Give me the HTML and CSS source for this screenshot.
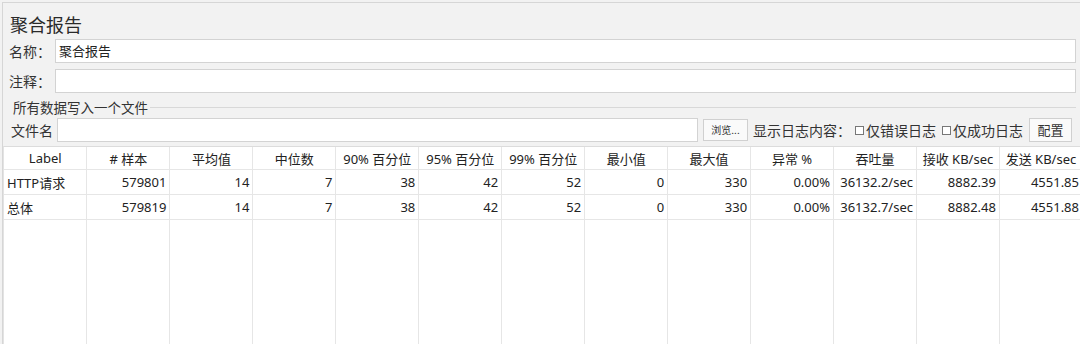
FILE: index.html
```html
<!DOCTYPE html>
<html lang="zh">
<head>
<meta charset="utf-8">
<link rel="stylesheet" href="styles.css">
</head>
<body>
<div class="panel">
  <div class="title">聚合报告</div>
  <div class="form-row">
    <span class="label">名称：</span>
    <div class="input">聚合报告</div>
  </div>
  <div class="form-row">
    <span class="label">注释：</span>
    <div class="input"></div>
  </div>
  <div class="group-title"><span>所有数据写入一个文件</span><div class="rule"></div></div>
  <div class="file-row">
    <span class="file-label">文件名</span>
    <div class="input file-input"></div>
    <div class="btn btn-small">浏览...</div>
    <span class="show-log">显示日志内容：</span>
    <span class="check"><span class="box"></span>仅错误日志</span>
    <span class="check"><span class="box"></span>仅成功日志</span>
    <div class="btn btn-config">配置</div>
  </div>
  <div class="table-wrap">
    <table class="grid">
      <thead>
        <tr>
          <th>Label</th><th># 样本</th><th>平均值</th><th>中位数</th><th>90% 百分位</th><th>95% 百分位</th><th>99% 百分位</th><th>最小值</th><th>最大值</th><th>异常 %</th><th>吞吐量</th><th>接收 KB/sec</th><th>发送 KB/sec</th>
        </tr>
      </thead>
      <tbody>
        <tr>
          <td class="txt">HTTP请求</td><td>579801</td><td>14</td><td>7</td><td>38</td><td>42</td><td>52</td><td>0</td><td>330</td><td>0.00%</td><td>36132.2/sec</td><td>8882.39</td><td>4551.85</td>
        </tr>
        <tr>
          <td class="txt">总体</td><td>579819</td><td>14</td><td>7</td><td>38</td><td>42</td><td>52</td><td>0</td><td>330</td><td>0.00%</td><td>36132.7/sec</td><td>8882.48</td><td>4551.88</td>
        </tr>
        <tr class="filler">
          <td></td><td></td><td></td><td></td><td></td><td></td><td></td><td></td><td></td><td></td><td></td><td></td><td></td>
        </tr>
      </tbody>
    </table>
  </div>
</div>
</body>
</html>
```

FILE: styles.css
```css
html, body {
  margin: 0;
  padding: 0;
  background: #f2f2f2;
  overflow: hidden;
  height: 344px;
}
body {
  font-family: "Noto Sans CJK SC", "Noto Sans", sans-serif;
  color: #222;
}
.panel {
  margin-top: 2px;
  margin-left: 2px;
  border-top: 1px solid #d6d6d6;
  border-left: 1px solid #d6d6d6;
  height: 341px;
  display: flex;
  flex-direction: column;
}
.title {
  font-size: 18px;
  line-height: 24px;
  padding: 9px 0 0 7px;
  height: 27px;
  color: #2a2a2a;
}
.form-row {
  display: flex;
  align-items: center;
  height: 24px;
  padding-right: 4px;
}
.form-row + .form-row {
  margin-top: 6px;
}
.label {
  width: 46px;
  padding-left: 6px;
  font-size: 14px;
  color: #333;
  flex: none;
}
.input {
  flex: 1;
  height: 22px;
  background: #fff;
  border: 1px solid #d3d3d3;
  font-size: 13px;
  line-height: 22px;
  padding-left: 3px;
  color: #222;
}
.group-title {
  display: flex;
  align-items: center;
  margin-top: 6px;
  padding-left: 10px;
  padding-right: 4px;
  font-size: 13.5px;
  color: #333;
  height: 16px;
}
.group-title .rule {
  flex: 1;
  height: 0;
  border-top: 1px solid #d8d8d8;
  margin-left: 2px;
}
.file-row {
  display: flex;
  align-items: center;
  height: 24px;
  margin-top: 3px;
  padding-right: 8px;
  font-size: 14px;
  color: #333;
}
.file-label {
  width: 46px;
  padding-left: 8px;
  flex: none;
}
.file-input {
  flex: none;
  width: 636px;
}
.btn {
  background: #fafafa;
  border: 1px solid #d0d0d0;
  color: #333;
  text-align: center;
  flex: none;
}
.btn-small {
  margin-left: 5px;
  width: 43px;
  height: 20px;
  font-size: 10px;
  line-height: 20px;
}
.show-log {
  margin-left: 5px;
}
.check {
  display: inline-flex;
  align-items: center;
  margin-left: 4px;
}
.check + .check {
  margin-left: 6px;
}
.box {
  width: 7px;
  height: 7px;
  border: 1px solid #777;
  background: #fff;
  margin-right: 2px;
}
.btn-config {
  margin-left: auto;
  width: 41px;
  height: 22px;
  line-height: 22px;
  font-size: 13px;
}
.table-wrap {
  margin-top: 4px;
  flex: 1;
  background: #fff;
  border-top: 1px solid #dcdcdc;
  border-left: 1px solid #e3e3e3;
  overflow: hidden;
}
.grid {
  border-collapse: collapse;
  table-layout: fixed;
  width: 1079px;
  height: 100%;
  font-family: "Noto Sans", "Noto Sans CJK SC", sans-serif;
  font-size: 13px;
  color: #222;
}
.grid th {
  font-weight: normal;
  height: 22px;
  text-align: center;
  border-right: 1px solid #e6e6e6;
  border-bottom: 1px solid #e6e6e6;
  padding: 0;
  white-space: nowrap;
}
.grid td {
  height: 24px;
  text-align: right;
  padding: 0 3px 0 0;
  border-right: 1px solid #e6e6e6;
  border-bottom: 1px solid #e6e6e6;
  white-space: nowrap;
}
.grid td.txt {
  text-align: left;
  padding-left: 3px;
}
.grid tr.filler td {
  height: auto;
  border-bottom: none;
}
```
